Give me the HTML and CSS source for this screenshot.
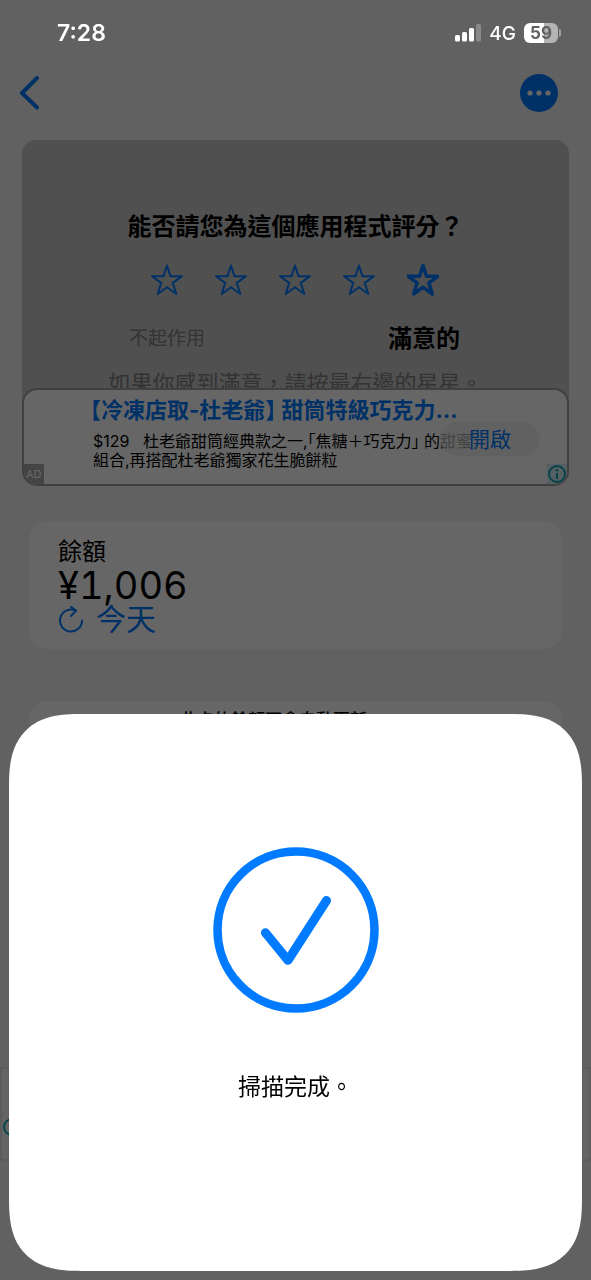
FILE: index.html
```html
<!DOCTYPE html>
<html lang="zh-Hant">
<head>
<meta charset="utf-8">
<meta name="viewport" content="width=device-width, initial-scale=1">
<title>餘額</title>
<link rel="stylesheet" href="styles.css">
</head>
<body>
<div class="app">
  <header class="nav">
    <button class="nav-back" type="button" aria-label="返回">
      <svg width="20" height="36" viewBox="0 0 20 36" fill="none" stroke="currentColor" stroke-width="4" stroke-linecap="round" stroke-linejoin="round"><path d="M18 3 3 18l15 14.500"/></svg>
    </button>
    <button class="nav-more" type="button" aria-label="更多">
      <svg width="38" height="38" viewBox="0 0 38 38"><circle cx="19" cy="19" r="19" fill="currentColor"/><g fill="#fff"><circle cx="10" cy="19" r="2.6"/><circle cx="19" cy="19" r="2.6"/><circle cx="28" cy="19" r="2.6"/></g></svg>
    </button>
  </header>

  <main class="content">
    <section class="rating">
      <h2 class="rating-title">能否請您為這個應用程式評分？</h2>
      <div class="stars">
        <button class="star" type="button" aria-label="1 星"><svg viewBox="0 0 32 32"><path d="M16 1.5 19.5 12.2H31L21.8 18.9 25.3 30 16 23.2 6.700 30 10.200 18.900 1 12.200H12.500Z"/></svg></button>
        <button class="star" type="button" aria-label="2 星"><svg viewBox="0 0 32 32"><path d="M16 1.5 19.5 12.2H31L21.8 18.9 25.3 30 16 23.2 6.700 30 10.200 18.900 1 12.200H12.500Z"/></svg></button>
        <button class="star" type="button" aria-label="3 星"><svg viewBox="0 0 32 32"><path d="M16 1.5 19.5 12.2H31L21.8 18.9 25.3 30 16 23.2 6.700 30 10.200 18.900 1 12.200H12.500Z"/></svg></button>
        <button class="star" type="button" aria-label="4 星"><svg viewBox="0 0 32 32"><path d="M16 1.5 19.5 12.2H31L21.8 18.9 25.3 30 16 23.2 6.700 30 10.200 18.900 1 12.200H12.500Z"/></svg></button>
        <button class="star star-strong" type="button" aria-label="5 星"><svg viewBox="0 0 32 32"><path d="M16 1.5 19.5 12.2H31L21.8 18.9 25.3 30 16 23.2 6.700 30 10.200 18.900 1 12.200H12.500Z"/></svg></button>
      </div>
      <div class="scale">
        <span class="scale-low">不起作用</span>
        <strong class="scale-high">滿意的</strong>
      </div>
      <p class="rating-hint">如果你感到滿意，請按最右邊的星星。</p>
    </section>

    <aside class="ad">
      <h3 class="ad-title">【冷凍店取-杜老爺】 甜筒特級巧克力…</h3>
      <p class="ad-text">$129 &nbsp; 杜老爺甜筒經典款之一,「焦糖＋巧克力」 的甜蜜<br>組合,再搭配杜老爺獨家花生脆餅粒</p>
      <button class="ad-open" type="button">開啟</button>
      <span class="ad-tag">AD</span>
      <svg class="ad-info" viewBox="0 0 20 20"><rect width="20" height="20" fill="#d6eef2"/><circle cx="10" cy="10" r="8" fill="none" stroke="#00a5b5" stroke-width="1.8"/><circle cx="10" cy="6.200" r="1.300" fill="#00a5b5"/><path d="M10 9v6" stroke="#00a5b5" stroke-width="2"/></svg>
    </aside>

    <section class="card balance">
      <h2 class="balance-label">餘額</h2>
      <p class="balance-amount">¥1,006</p>
      <button class="balance-refresh" type="button">
        <svg width="26" height="28" viewBox="0 0 26 28" fill="none" stroke="currentColor" stroke-width="2" stroke-linecap="round" stroke-linejoin="round"><path d="M24 14.500A11 11 0 1 1 17.500 4.500M13 0.800l5 3.800-5 5.400"/></svg>
        今天
      </button>
    </section>

    <section class="card note">
      <p class="note-text">此卡的餘額不會自動更新</p>
    </section>
  </main>

  <footer class="banner">
    <svg class="banner-info" viewBox="0 0 18 18" fill="none" stroke="#00a5b5" stroke-width="1.800"><circle cx="9" cy="9" r="8"/><path d="M9 8v5"/></svg>
  </footer>
</div>

<div class="scrim"></div>

<div class="status">
  <span class="status-time">7:28</span>
  <div class="status-right">
    <svg width="26" height="18" viewBox="0 0 26 18" fill="#fff"><rect x="0" y="11" width="5" height="6.500" rx="1.500"/><rect x="7" y="8" width="5" height="9.500" rx="1.500"/><rect x="14" y="4" width="5" height="13.500" rx="1.500"/><rect x="21" y="0" width="5" height="17.500" rx="1.500" opacity=".25"/></svg>
    <span class="status-net">4G</span>
    <span class="battery">59</span>
  </div>
</div>

<div class="sheet" role="dialog" aria-modal="true" aria-labelledby="sheet-text">
  <svg class="sheet-icon" viewBox="0 0 166 166" fill="none" stroke="#007aff" stroke-linecap="round" stroke-linejoin="round"><circle cx="83" cy="83" r="78.500" stroke-width="8.500"/><path d="M52.500 85.800 75 113.300 113.500 53.500" stroke-width="9"/></svg>
  <p class="sheet-text" id="sheet-text">掃描完成。</p>
</div>
</body>
</html>
```
FILE: styles.css
```css
* {
  box-sizing: border-box;
}

body {
  margin: 0;
  background: #f2f2f2;
  color: #000;
  font-family: Inter, "Noto Sans CJK TC", sans-serif;
}

h2, h3, p {
  margin: 0;
}

button {
  display: flex;
  align-items: center;
  margin: 0;
  padding: 0;
  border: 0;
  background: none;
  color: #007aff;
  font: inherit;
}

svg {
  display: block;
}

.app {
  display: flex;
  flex-direction: column;
  height: 100vh;
  padding-top: 65px;
  overflow: hidden;
}

.nav {
  display: flex;
  align-items: center;
  justify-content: space-between;
  padding: 9px 33px 9px 19px;
}

.content {
  flex: 1;
  min-height: 0;
  overflow: hidden;
  padding: 19px 22px 0;
}

.rating {
  height: 276px;
  padding-top: 69px;
  border-radius: 14px;
  background: #c8c8c8;
  text-align: center;
}

.rating-title {
  font-size: 24px;
  line-height: 36px;
  font-weight: 700;
}

.stars {
  display: flex;
  justify-content: center;
  gap: 32px;
  padding: 19px 2px 0 0;
}

.star {
  width: 32px;
  height: 32px;
}

.star svg {
  width: 32px;
  height: 32px;
  fill: none;
  stroke: currentColor;
  stroke-width: 2;
  stroke-linejoin: round;
}

.star-strong svg {
  stroke-width: 3.5;
}

.scale {
  display: flex;
  align-items: center;
  justify-content: space-between;
  padding: 25px 109px 0 107px;
  line-height: 36px;
}

.scale-low {
  color: #808080;
  font-size: 19px;
}

.scale-high {
  font-size: 24px;
  font-weight: 700;
}

.rating-hint {
  padding-top: 10px;
  color: #808080;
  font-size: 22px;
  line-height: 32px;
}

.ad {
  position: relative;
  height: 98px;
  margin-top: -28px;
  padding: 4px 16px 0 66px;
  overflow: hidden;
  border: 2px solid #a0a0a0;
  border-radius: 15px;
  background: #fff;
  font-feature-settings: "halt";
}

.ad-title {
  color: #007aff;
  font-size: 22px;
  line-height: 32px;
  font-weight: 700;
  white-space: nowrap;
}

.ad-text {
  padding: 6px 0 0 3px;
  font-size: 16px;
  line-height: 19px;
  white-space: nowrap;
}

.ad-open {
  position: absolute;
  top: 32px;
  right: 27px;
  justify-content: center;
  width: 100px;
  height: 34px;
  padding-bottom: 3px;
  border-radius: 17px;
  background: rgba(238, 238, 238, 0.7);
  font-size: 21px;
}

.ad-tag {
  position: absolute;
  bottom: 0;
  left: 0;
  padding: 0 2px;
  background: #aaa;
  color: #fff;
  font-size: 11px;
  line-height: 20px;
}

.ad-info {
  position: absolute;
  right: 0;
  bottom: 0;
  width: 20px;
  height: 20px;
}

.card {
  margin: 0 7px;
  border-radius: 18px;
  background: #fff;
}

.balance {
  margin-top: 35px;
  padding: 15px 29px 12px;
}

.balance-label {
  font-size: 24px;
  line-height: 32px;
  font-weight: 400;
}

.balance-amount {
  font-size: 38px;
  line-height: 34px;
  font-variant-numeric: tabular-nums;
}

.balance-refresh {
  gap: 12px;
  font-size: 30px;
  line-height: 35px;
}

.note {
  height: 200px;
  margin-top: 52px;
  padding: 5px 20px 0 151px;
}

.note-text {
  font-size: 17px;
  line-height: 28px;
  font-weight: 500;
}

.banner {
  height: 94px;
  margin-bottom: 119px;
  padding: 49px 1px 0;
  border: 2px solid #e6e6e6;
  background: #fafafa;
}

.banner-info {
  width: 18px;
  height: 18px;
}

.scrim {
  position: fixed;
  inset: 0;
  background: rgba(0, 0, 0, 0.6);
}

.status {
  position: fixed;
  top: 0;
  left: 0;
  right: 0;
  display: flex;
  align-items: center;
  justify-content: space-between;
  height: 66px;
  padding: 0 30px 0 57px;
  color: #fff;
}

.status-time {
  font-size: 23px;
  font-weight: 600;
}

.status-right {
  display: flex;
  align-items: center;
  gap: 8px;
}

.status-net {
  font-size: 19px;
  font-weight: 500;
}

.battery {
  position: relative;
  width: 34px;
  height: 20px;
  margin-right: 3px;
  border-radius: 6px;
  background: linear-gradient(90deg, #fff 59%, #b4b4b4 59%);
  color: #616161;
  font-size: 17px;
  line-height: 20px;
  font-weight: 700;
  text-align: center;
}

.battery::after {
  content: "";
  position: absolute;
  top: 6px;
  right: -3px;
  width: 2px;
  height: 8px;
  border-radius: 0 2px 2px 0;
  background: #a0a0a0;
}

.sheet {
  position: fixed;
  right: 9px;
  bottom: 9px;
  left: 9px;
  display: flex;
  flex-direction: column;
  align-items: center;
  gap: 58px;
  padding: 133px 24px 168px;
  border-radius: 56px;
  background: #fff;
}

@supports (corner-shape: squircle) {
  .sheet {
    border-radius: 72px;
    corner-shape: superellipse(1.4);
  }
}

.sheet-icon {
  width: 166px;
  height: 166px;
}

.sheet-text {
  font-size: 23px;
  line-height: 32px;
}
```
